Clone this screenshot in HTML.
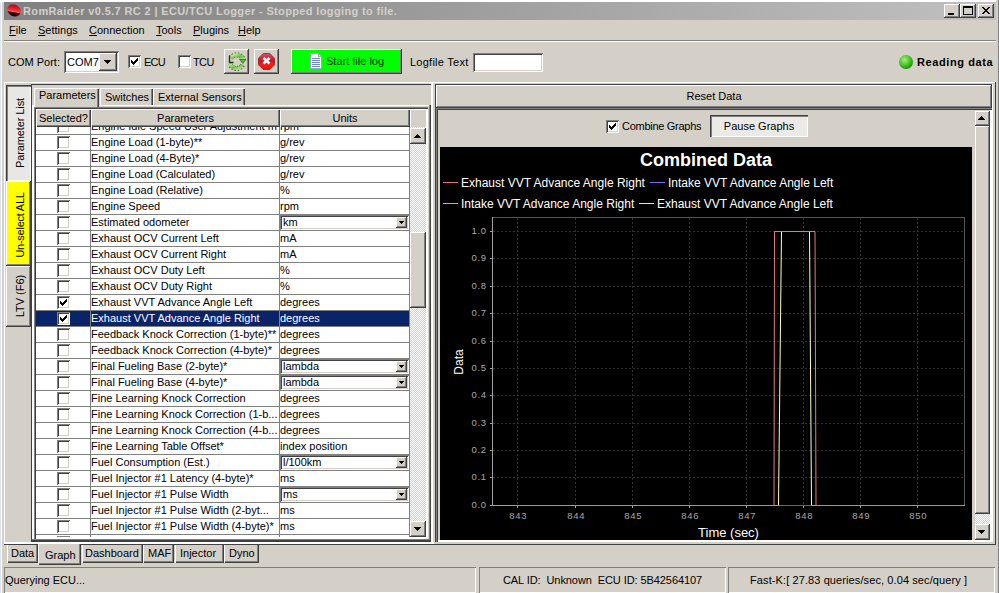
<!DOCTYPE html><html><head><meta charset="utf-8"><style>
html,body{margin:0;padding:0;} body{width:999px;height:593px;overflow:hidden;position:relative;background:#d4d0c8;font-family:"Liberation Sans", sans-serif;font-size:11px;color:#000;}
.t{position:absolute;white-space:nowrap;line-height:0;height:0;}
.t>span.u{text-decoration:underline;}
</style></head><body>
<div style="position:absolute;left:0px;top:0px;width:1px;height:593px;background:#dde3ea;"></div>
<div style="position:absolute;left:1px;top:0px;width:1px;height:593px;background:#ffffff;"></div>
<div style="position:absolute;left:0px;top:0px;width:999px;height:2px;background:#ffffff;"></div>
<div style="position:absolute;left:996px;top:0px;width:2px;height:593px;background:#d4d0c8;"></div>
<div style="position:absolute;left:998px;top:0px;width:1px;height:593px;background:#808080;"></div>
<div style="position:absolute;left:4px;top:2px;width:992px;height:18px;background:linear-gradient(to right,#808080,#c0c0c0);"></div>
<svg style="position:absolute;left:4px;top:2px" width="20" height="18"><defs><linearGradient id="ig" gradientUnits="userSpaceOnUse" x1="8" y1="3" x2="6" y2="15"><stop offset="0" stop-color="#b01020"/><stop offset="0.3" stop-color="#e82030"/><stop offset="0.52" stop-color="#ff5060"/><stop offset="0.6" stop-color="#400000"/><stop offset="1" stop-color="#000"/></linearGradient><clipPath id="ic"><ellipse cx="10" cy="8.3" rx="7" ry="5.8" transform="rotate(28 10 8.3)"/></clipPath></defs><rect x="0" y="0" width="20" height="18" fill="url(#ig)" clip-path="url(#ic)"/></svg>
<div class="t" style="left:23px;top:11px;font-size:11px;color:#d4d0c8;font-weight:bold;letter-spacing:0.36px;">RomRaider v0.5.7 RC 2 | ECU/TCU Logger - Stopped logging to file.</div>
<div style="position:absolute;left:944px;top:4px;width:16px;height:14px;background:#d4d0c8;box-shadow:inset -1px -1px #404040, inset 1px 1px #ffffff, inset -2px -2px #808080, inset 2px 2px #d4d0c8;"><svg width="16" height="14" style="position:absolute;left:0;top:0" shape-rendering="crispEdges"><rect x="4" y="9" width="6" height="2" fill="#000"/></svg></div>
<div style="position:absolute;left:960px;top:4px;width:16px;height:14px;background:#d4d0c8;box-shadow:inset -1px -1px #404040, inset 1px 1px #ffffff, inset -2px -2px #808080, inset 2px 2px #d4d0c8;"><svg width="16" height="14" style="position:absolute;left:0;top:0" shape-rendering="crispEdges"><path fill="none" stroke="#000" d="M3.5 3.5h9v7h-9z"/><rect x="3" y="2" width="10" height="2" fill="#000"/></svg></div>
<div style="position:absolute;left:978px;top:4px;width:16px;height:14px;background:#d4d0c8;box-shadow:inset -1px -1px #404040, inset 1px 1px #ffffff, inset -2px -2px #808080, inset 2px 2px #d4d0c8;"><svg width="16" height="14" style="position:absolute;left:0;top:0" shape-rendering="crispEdges"><path fill="#000" d="M4 3h2v1h1v1h2v-1h1v-1h2v1h-1v1h-1v1h-1v1h1v1h1v1h1v1h-2v-1h-1v-1h-2v1h-1v1h-2v-1h1v-1h1v-1h1v-1h-1v-1h-1v-1h-1z"/></svg></div>
<div class="t" style="left:9px;top:30px;font-size:11px;color:#000;font-weight:normal;"><span class="u">F</span>ile</div>
<div class="t" style="left:38px;top:30px;font-size:11px;color:#000;font-weight:normal;"><span class="u">S</span>ettings</div>
<div class="t" style="left:89px;top:30px;font-size:11px;color:#000;font-weight:normal;"><span class="u">C</span>onnection</div>
<div class="t" style="left:156px;top:30px;font-size:11px;color:#000;font-weight:normal;"><span class="u">T</span>ools</div>
<div class="t" style="left:193px;top:30px;font-size:11px;color:#000;font-weight:normal;"><span class="u">P</span>lugins</div>
<div class="t" style="left:238px;top:30px;font-size:11px;color:#000;font-weight:normal;"><span class="u">H</span>elp</div>
<div style="position:absolute;left:4px;top:40px;width:992px;height:1px;background:#808080;"></div>
<div style="position:absolute;left:4px;top:41px;width:992px;height:1px;background:#ffffff;"></div>
<div class="t" style="left:8px;top:62px;font-size:11px;color:#000;font-weight:normal;">COM Port:</div>
<div style="position:absolute;left:64px;top:51px;width:55px;height:22px;background:#fff;box-shadow:inset 1px 1px #808080, inset -1px -1px #ffffff, inset 2px 2px #404040, inset -2px -2px #d4d0c8;"><div class="t" style="left:3px;top:11px;font-size:11px;color:#000;font-weight:normal;">COM7</div></div>
<div style="position:absolute;left:99px;top:53px;width:18px;height:18px;background:#d4d0c8;box-shadow:inset -1px -1px #404040, inset 1px 1px #ffffff, inset -2px -2px #808080, inset 2px 2px #d4d0c8;"><svg width="18" height="18" style="position:absolute;left:0;top:0" shape-rendering="crispEdges"><path fill="#000" d="M5 7h7v1h-7zM6 8h5v1h-5zM7 9h3v1h-3zM8 10h1v1h-1z"/></svg></div>
<div style="position:absolute;left:128px;top:55px;width:13px;height:13px;background:#fff;box-shadow:inset 1px 1px #808080, inset -1px -1px #ffffff, inset 2px 2px #404040, inset -2px -2px #d4d0c8;"><svg width="13" height="13" style="position:absolute;left:0;top:0" shape-rendering="crispEdges"><path fill="#000" d="M9 3h1v1h-1zM8 4h2v1h-2zM3 5h1v1h-1zM7 5h3v1h-3zM3 6h2v1h-2zM6 6h3v1h-3zM3 7h5v1h-5zM4 8h3v1h-3zM5 9h1v1h-1z"/></svg></div>
<div class="t" style="left:144px;top:62px;font-size:11px;color:#000;font-weight:normal;letter-spacing:-0.8px;">ECU</div>
<div style="position:absolute;left:178px;top:55px;width:13px;height:13px;background:#fff;box-shadow:inset 1px 1px #808080, inset -1px -1px #ffffff, inset 2px 2px #404040, inset -2px -2px #d4d0c8;"></div>
<div class="t" style="left:193px;top:62px;font-size:11px;color:#000;font-weight:normal;letter-spacing:-0.6px;">TCU</div>
<div style="position:absolute;left:224px;top:49px;width:25px;height:25px;background:#d4d0c8;box-shadow:inset -1px -1px #404040, inset 1px 1px #ffffff, inset -2px -2px #808080, inset 2px 2px #d4d0c8;"><svg width="25" height="25" style="position:absolute;left:0;top:0"><defs><linearGradient id="rg" x1="0" y1="0" x2="1" y2="1"><stop offset="0" stop-color="#c8f0a0"/><stop offset="0.5" stop-color="#6cc040"/><stop offset="1" stop-color="#b0e890"/></linearGradient></defs><g fill="none" stroke-linecap="butt"><path d="M7 9 A7 7 0 0 1 19.5 11" stroke="#2a5a10" stroke-width="5" stroke-dasharray="1.2,1.3"/><path d="M7 9 A7 7 0 0 1 19.5 11" stroke="url(#rg)" stroke-width="3.4"/><path d="M18.5 16 A7 7 0 0 1 6 15" stroke="#2a5a10" stroke-width="5" stroke-dasharray="1.2,1.3"/><path d="M18.5 16 A7 7 0 0 1 6 15" stroke="url(#rg)" stroke-width="3.4"/></g><path d="M15.5 10.5h6.5l-3.2 4z" fill="#5cb030" stroke="#2a5a10" stroke-width="0.6"/><path d="M5.5 6.5v7h4" fill="none" stroke="#1e3a10" stroke-width="1.4"/></svg></div>
<div style="position:absolute;left:254px;top:49px;width:25px;height:25px;background:#d4d0c8;box-shadow:inset -1px -1px #404040, inset 1px 1px #ffffff, inset -2px -2px #808080, inset 2px 2px #d4d0c8;"><svg width="25" height="25" style="position:absolute;left:0;top:0"><defs><linearGradient id="sg" x1="0" y1="0" x2="0" y2="1"><stop offset="0" stop-color="#d85070"/><stop offset="0.45" stop-color="#c01828"/><stop offset="0.7" stop-color="#ff1818"/><stop offset="1" stop-color="#e01010"/></linearGradient></defs><path d="M9.2 4.5h6.6l4.7 4.7v6.6l-4.7 4.7h-6.6l-4.7-4.7v-6.6z" fill="url(#sg)" stroke="#902020" stroke-width="0.8"/><path d="M9.5 9l6 5.5M15.5 9l-6 5.5" stroke="#fff" stroke-width="2.6"/></svg></div>
<div style="position:absolute;left:291px;top:49px;width:111px;height:25px;background:#00ff00;box-shadow:inset -1px -1px #404040, inset 1px 1px #ffffff, inset -2px -2px #808080;"><svg width="14" height="16" style="position:absolute;left:19px;top:4px" shape-rendering="crispEdges"><path d="M0.5 0.5h8l3 3v11.5h-11z" fill="#ffffff" stroke="#9aa8c8"/><path d="M8.5 0.5v3h3" fill="none" stroke="#9aa8c8"/><path d="M2 5h8M2 7h8M2 9h8M2 11h8M2 13h8" stroke="#6f86c8" stroke-width="1" transform="translate(0,0.5)"/></svg><div class="t" style="left:35px;top:12px;font-size:11px;color:#003000;font-weight:normal;">Start file log</div></div>
<div class="t" style="left:410px;top:62px;font-size:11px;color:#000;font-weight:normal;letter-spacing:0.25px;">Logfile Text</div>
<div style="position:absolute;left:473px;top:53px;width:70px;height:19px;background:#fff;box-shadow:inset 1px 1px #808080, inset -1px -1px #ffffff, inset 2px 2px #404040, inset -2px -2px #d4d0c8;"></div>
<svg style="position:absolute;left:898px;top:54px" width="16" height="16"><defs><radialGradient id="lg" cx="0.4" cy="0.35" r="0.7"><stop offset="0" stop-color="#a8f080"/><stop offset="0.6" stop-color="#40c020"/><stop offset="1" stop-color="#208010"/></radialGradient></defs><circle cx="8" cy="8" r="7" fill="url(#lg)"/></svg>
<div class="t" style="left:917px;top:62px;font-size:11px;color:#000;font-weight:bold;letter-spacing:0.6px;">Reading data</div>
<div style="position:absolute;left:4px;top:82px;width:992px;height:1px;background:#fff;"></div>
<div style="position:absolute;left:4px;top:82px;width:1px;height:463px;background:#fff;"></div>
<div style="position:absolute;left:4px;top:544px;width:992px;height:1px;background:#404040;"></div>
<div style="position:absolute;left:995px;top:82px;width:1px;height:463px;background:#404040;"></div>
<div style="position:absolute;left:6px;top:85px;width:25px;height:96px;background:#e9e7e3;box-shadow:inset 1px 1px #404040, inset 2px 2px #808080, inset -1px -1px #ffffff;"></div>
<div style="position:absolute;left:20px;top:133px;width:0;height:0;"><div style="position:absolute;left:0;top:0;transform:translate(-50%,-50%) rotate(-90deg);white-space:nowrap;font-size:11px;line-height:13px;color:#000;letter-spacing:-0.1px">Parameter List</div></div>
<div style="position:absolute;left:6px;top:181px;width:25px;height:85px;background:#ffff00;box-shadow:inset -1px -1px #404040, inset 1px 1px #ffffff, inset -2px -2px #808080;"></div>
<div style="position:absolute;left:20px;top:225px;width:0;height:0;"><div style="position:absolute;left:0;top:0;transform:translate(-50%,-50%) rotate(-90deg);white-space:nowrap;font-size:11px;line-height:13px;color:#000;letter-spacing:-0.25px">Un-select ALL</div></div>
<div style="position:absolute;left:6px;top:266px;width:25px;height:61px;background:#d4d0c8;box-shadow:inset -1px -1px #404040, inset 1px 1px #ffffff, inset -2px -2px #808080;"></div>
<div style="position:absolute;left:20px;top:296px;width:0;height:0;"><div style="position:absolute;left:0;top:0;transform:translate(-50%,-50%) rotate(-90deg);white-space:nowrap;font-size:11px;line-height:13px;color:#000;letter-spacing:0px">LTV (F6)</div></div>
<div style="position:absolute;left:31px;top:84px;width:1px;height:458px;background:#404040;"></div>
<div style="position:absolute;left:31px;top:84px;width:401px;height:1px;background:#404040;"></div>
<div style="position:absolute;left:32px;top:105px;width:398px;height:1px;background:#fff;"></div>
<div style="position:absolute;left:32px;top:105px;width:2px;height:436px;background:#fff;"></div>
<div style="position:absolute;left:429px;top:105px;width:1px;height:436px;background:#808080;"></div>
<div style="position:absolute;left:430px;top:105px;width:1px;height:437px;background:#404040;"></div>
<div style="position:absolute;left:32px;top:539px;width:398px;height:1px;background:#808080;"></div>
<div style="position:absolute;left:31px;top:540px;width:400px;height:2px;background:#404040;"></div>
<div style="position:absolute;left:5px;top:542px;width:429px;height:2px;background:#fff;"></div>
<div style="position:absolute;left:100px;top:88px;width:53px;height:17px;background:#d4d0c8;box-shadow:inset 1px 1px #ffffff, inset -1px 0 #404040, inset -2px 0 #808080;"><div class="t" style="left:5px;top:9px;font-size:11px;color:#000;font-weight:normal;">Switches</div></div>
<div style="position:absolute;left:153px;top:88px;width:92px;height:17px;background:#d4d0c8;box-shadow:inset 1px 1px #ffffff, inset -1px 0 #404040, inset -2px 0 #808080;"><div class="t" style="left:5px;top:9px;font-size:11px;color:#000;font-weight:normal;">External Sensors</div></div>
<div style="position:absolute;left:34px;top:88px;width:65px;height:19px;background:#d4d0c8;box-shadow:inset 1px 1px #ffffff, inset -1px 0 #404040, inset -2px 0 #808080;"><div class="t" style="left:5px;top:7px;font-size:11px;color:#000;font-weight:normal;">Parameters</div></div>
<div style="position:absolute;left:34px;top:107px;width:394px;height:432px;background:#fff;box-shadow:inset 1px 1px #808080, inset 2px 2px #404040, inset -2px -2px #fff;"></div>
<div style="position:absolute;left:36px;top:109px;width:55px;height:18px;background:#d4d0c8;box-shadow:inset 1px 1px #fff, inset -1px -1px #404040, inset -2px -2px #808080;"><div class="t" style="left:0;width:55px;text-align:center;top:9px;">Selected?</div></div>
<div style="position:absolute;left:91px;top:109px;width:189px;height:18px;background:#d4d0c8;box-shadow:inset 1px 1px #fff, inset -1px -1px #404040, inset -2px -2px #808080;"><div class="t" style="left:0;width:189px;text-align:center;top:9px;">Parameters</div></div>
<div style="position:absolute;left:280px;top:109px;width:130px;height:18px;background:#d4d0c8;box-shadow:inset 1px 1px #fff, inset -1px -1px #404040, inset -2px -2px #808080;"><div class="t" style="left:0;width:130px;text-align:center;top:9px;">Units</div></div>
<div style="position:absolute;left:410px;top:109px;width:16px;height:18px;background:#d4d0c8;box-shadow:inset 1px 1px #fff;"></div>
<div style="position:absolute;left:36px;top:127px;width:374px;height:410px;overflow:hidden;"><div style="position:absolute;left:0;top:-8px;width:374px;height:16px;"><div style="position:absolute;left:0px;top:0px;width:374px;height:15px;background:#fff;"></div><div style="position:absolute;left:0px;top:15px;width:374px;height:1px;background:#808080;"></div><div style="position:absolute;left:54px;top:0px;width:1px;height:16px;background:#808080;"></div><div style="position:absolute;left:243px;top:0px;width:1px;height:16px;background:#808080;"></div><div style="position:absolute;left:373px;top:0px;width:1px;height:16px;background:#808080;"></div><div style="position:absolute;left:21px;top:1px;width:13px;height:13px;background:#fff;box-shadow:inset 1px 1px #808080, inset -1px -1px #ffffff, inset 2px 2px #404040, inset -2px -2px #d4d0c8;"></div><div style="position:absolute;left:55px;top:0;width:188px;height:15px;overflow:hidden;"><div class="t" style="left:0px;top:7px;font-size:11px;color:#000;font-weight:normal;">Engine Idle Speed User Adjustment m</div></div><div style="position:absolute;left:244px;top:0;width:129px;height:15px;overflow:hidden;"><div class="t" style="left:0px;top:7px;font-size:11px;color:#000;font-weight:normal;">rpm</div></div></div><div style="position:absolute;left:0;top:8px;width:374px;height:16px;"><div style="position:absolute;left:0px;top:0px;width:374px;height:15px;background:#fff;"></div><div style="position:absolute;left:0px;top:15px;width:374px;height:1px;background:#808080;"></div><div style="position:absolute;left:54px;top:0px;width:1px;height:16px;background:#808080;"></div><div style="position:absolute;left:243px;top:0px;width:1px;height:16px;background:#808080;"></div><div style="position:absolute;left:373px;top:0px;width:1px;height:16px;background:#808080;"></div><div style="position:absolute;left:21px;top:1px;width:13px;height:13px;background:#fff;box-shadow:inset 1px 1px #808080, inset -1px -1px #ffffff, inset 2px 2px #404040, inset -2px -2px #d4d0c8;"></div><div style="position:absolute;left:55px;top:0;width:188px;height:15px;overflow:hidden;"><div class="t" style="left:0px;top:7px;font-size:11px;color:#000;font-weight:normal;">Engine Load (1-byte)**</div></div><div style="position:absolute;left:244px;top:0;width:129px;height:15px;overflow:hidden;"><div class="t" style="left:0px;top:7px;font-size:11px;color:#000;font-weight:normal;">g/rev</div></div></div><div style="position:absolute;left:0;top:24px;width:374px;height:16px;"><div style="position:absolute;left:0px;top:0px;width:374px;height:15px;background:#fff;"></div><div style="position:absolute;left:0px;top:15px;width:374px;height:1px;background:#808080;"></div><div style="position:absolute;left:54px;top:0px;width:1px;height:16px;background:#808080;"></div><div style="position:absolute;left:243px;top:0px;width:1px;height:16px;background:#808080;"></div><div style="position:absolute;left:373px;top:0px;width:1px;height:16px;background:#808080;"></div><div style="position:absolute;left:21px;top:1px;width:13px;height:13px;background:#fff;box-shadow:inset 1px 1px #808080, inset -1px -1px #ffffff, inset 2px 2px #404040, inset -2px -2px #d4d0c8;"></div><div style="position:absolute;left:55px;top:0;width:188px;height:15px;overflow:hidden;"><div class="t" style="left:0px;top:7px;font-size:11px;color:#000;font-weight:normal;">Engine Load (4-Byte)*</div></div><div style="position:absolute;left:244px;top:0;width:129px;height:15px;overflow:hidden;"><div class="t" style="left:0px;top:7px;font-size:11px;color:#000;font-weight:normal;">g/rev</div></div></div><div style="position:absolute;left:0;top:40px;width:374px;height:16px;"><div style="position:absolute;left:0px;top:0px;width:374px;height:15px;background:#fff;"></div><div style="position:absolute;left:0px;top:15px;width:374px;height:1px;background:#808080;"></div><div style="position:absolute;left:54px;top:0px;width:1px;height:16px;background:#808080;"></div><div style="position:absolute;left:243px;top:0px;width:1px;height:16px;background:#808080;"></div><div style="position:absolute;left:373px;top:0px;width:1px;height:16px;background:#808080;"></div><div style="position:absolute;left:21px;top:1px;width:13px;height:13px;background:#fff;box-shadow:inset 1px 1px #808080, inset -1px -1px #ffffff, inset 2px 2px #404040, inset -2px -2px #d4d0c8;"></div><div style="position:absolute;left:55px;top:0;width:188px;height:15px;overflow:hidden;"><div class="t" style="left:0px;top:7px;font-size:11px;color:#000;font-weight:normal;">Engine Load (Calculated)</div></div><div style="position:absolute;left:244px;top:0;width:129px;height:15px;overflow:hidden;"><div class="t" style="left:0px;top:7px;font-size:11px;color:#000;font-weight:normal;">g/rev</div></div></div><div style="position:absolute;left:0;top:56px;width:374px;height:16px;"><div style="position:absolute;left:0px;top:0px;width:374px;height:15px;background:#fff;"></div><div style="position:absolute;left:0px;top:15px;width:374px;height:1px;background:#808080;"></div><div style="position:absolute;left:54px;top:0px;width:1px;height:16px;background:#808080;"></div><div style="position:absolute;left:243px;top:0px;width:1px;height:16px;background:#808080;"></div><div style="position:absolute;left:373px;top:0px;width:1px;height:16px;background:#808080;"></div><div style="position:absolute;left:21px;top:1px;width:13px;height:13px;background:#fff;box-shadow:inset 1px 1px #808080, inset -1px -1px #ffffff, inset 2px 2px #404040, inset -2px -2px #d4d0c8;"></div><div style="position:absolute;left:55px;top:0;width:188px;height:15px;overflow:hidden;"><div class="t" style="left:0px;top:7px;font-size:11px;color:#000;font-weight:normal;">Engine Load (Relative)</div></div><div style="position:absolute;left:244px;top:0;width:129px;height:15px;overflow:hidden;"><div class="t" style="left:0px;top:7px;font-size:11px;color:#000;font-weight:normal;">%</div></div></div><div style="position:absolute;left:0;top:72px;width:374px;height:16px;"><div style="position:absolute;left:0px;top:0px;width:374px;height:15px;background:#fff;"></div><div style="position:absolute;left:0px;top:15px;width:374px;height:1px;background:#808080;"></div><div style="position:absolute;left:54px;top:0px;width:1px;height:16px;background:#808080;"></div><div style="position:absolute;left:243px;top:0px;width:1px;height:16px;background:#808080;"></div><div style="position:absolute;left:373px;top:0px;width:1px;height:16px;background:#808080;"></div><div style="position:absolute;left:21px;top:1px;width:13px;height:13px;background:#fff;box-shadow:inset 1px 1px #808080, inset -1px -1px #ffffff, inset 2px 2px #404040, inset -2px -2px #d4d0c8;"></div><div style="position:absolute;left:55px;top:0;width:188px;height:15px;overflow:hidden;"><div class="t" style="left:0px;top:7px;font-size:11px;color:#000;font-weight:normal;">Engine Speed</div></div><div style="position:absolute;left:244px;top:0;width:129px;height:15px;overflow:hidden;"><div class="t" style="left:0px;top:7px;font-size:11px;color:#000;font-weight:normal;">rpm</div></div></div><div style="position:absolute;left:0;top:88px;width:374px;height:16px;"><div style="position:absolute;left:0px;top:0px;width:374px;height:15px;background:#fff;"></div><div style="position:absolute;left:0px;top:15px;width:374px;height:1px;background:#808080;"></div><div style="position:absolute;left:54px;top:0px;width:1px;height:16px;background:#808080;"></div><div style="position:absolute;left:243px;top:0px;width:1px;height:16px;background:#808080;"></div><div style="position:absolute;left:373px;top:0px;width:1px;height:16px;background:#808080;"></div><div style="position:absolute;left:21px;top:1px;width:13px;height:13px;background:#fff;box-shadow:inset 1px 1px #808080, inset -1px -1px #ffffff, inset 2px 2px #404040, inset -2px -2px #d4d0c8;"></div><div style="position:absolute;left:55px;top:0;width:188px;height:15px;overflow:hidden;"><div class="t" style="left:0px;top:7px;font-size:11px;color:#000;font-weight:normal;">Estimated odometer</div></div><div style="position:absolute;left:244px;top:0px;width:129px;height:15px;background:#fff;box-shadow:inset 1px 1px #808080, inset -1px -1px #ffffff, inset 2px 2px #404040, inset -2px -2px #d4d0c8;"><div class="t" style="left:3px;top:7px;font-size:11px;color:#000;font-weight:normal;">km</div><div style="position:absolute;left:116px;top:2px;width:11px;height:11px;background:#d4d0c8;box-shadow:inset -1px -1px #404040, inset 1px 1px #ffffff, inset -2px -2px #808080, inset 2px 2px #d4d0c8;"><svg width="11" height="11" style="position:absolute;left:0;top:0" shape-rendering="crispEdges"><path fill="#000" d="M3 4h5v1h-5zM4 5h3v1h-3zM5 6h1v1h-1z"/></svg></div></div></div><div style="position:absolute;left:0;top:104px;width:374px;height:16px;"><div style="position:absolute;left:0px;top:0px;width:374px;height:15px;background:#fff;"></div><div style="position:absolute;left:0px;top:15px;width:374px;height:1px;background:#808080;"></div><div style="position:absolute;left:54px;top:0px;width:1px;height:16px;background:#808080;"></div><div style="position:absolute;left:243px;top:0px;width:1px;height:16px;background:#808080;"></div><div style="position:absolute;left:373px;top:0px;width:1px;height:16px;background:#808080;"></div><div style="position:absolute;left:21px;top:1px;width:13px;height:13px;background:#fff;box-shadow:inset 1px 1px #808080, inset -1px -1px #ffffff, inset 2px 2px #404040, inset -2px -2px #d4d0c8;"></div><div style="position:absolute;left:55px;top:0;width:188px;height:15px;overflow:hidden;"><div class="t" style="left:0px;top:7px;font-size:11px;color:#000;font-weight:normal;">Exhaust OCV Current Left</div></div><div style="position:absolute;left:244px;top:0;width:129px;height:15px;overflow:hidden;"><div class="t" style="left:0px;top:7px;font-size:11px;color:#000;font-weight:normal;">mA</div></div></div><div style="position:absolute;left:0;top:120px;width:374px;height:16px;"><div style="position:absolute;left:0px;top:0px;width:374px;height:15px;background:#fff;"></div><div style="position:absolute;left:0px;top:15px;width:374px;height:1px;background:#808080;"></div><div style="position:absolute;left:54px;top:0px;width:1px;height:16px;background:#808080;"></div><div style="position:absolute;left:243px;top:0px;width:1px;height:16px;background:#808080;"></div><div style="position:absolute;left:373px;top:0px;width:1px;height:16px;background:#808080;"></div><div style="position:absolute;left:21px;top:1px;width:13px;height:13px;background:#fff;box-shadow:inset 1px 1px #808080, inset -1px -1px #ffffff, inset 2px 2px #404040, inset -2px -2px #d4d0c8;"></div><div style="position:absolute;left:55px;top:0;width:188px;height:15px;overflow:hidden;"><div class="t" style="left:0px;top:7px;font-size:11px;color:#000;font-weight:normal;">Exhaust OCV Current Right</div></div><div style="position:absolute;left:244px;top:0;width:129px;height:15px;overflow:hidden;"><div class="t" style="left:0px;top:7px;font-size:11px;color:#000;font-weight:normal;">mA</div></div></div><div style="position:absolute;left:0;top:136px;width:374px;height:16px;"><div style="position:absolute;left:0px;top:0px;width:374px;height:15px;background:#fff;"></div><div style="position:absolute;left:0px;top:15px;width:374px;height:1px;background:#808080;"></div><div style="position:absolute;left:54px;top:0px;width:1px;height:16px;background:#808080;"></div><div style="position:absolute;left:243px;top:0px;width:1px;height:16px;background:#808080;"></div><div style="position:absolute;left:373px;top:0px;width:1px;height:16px;background:#808080;"></div><div style="position:absolute;left:21px;top:1px;width:13px;height:13px;background:#fff;box-shadow:inset 1px 1px #808080, inset -1px -1px #ffffff, inset 2px 2px #404040, inset -2px -2px #d4d0c8;"></div><div style="position:absolute;left:55px;top:0;width:188px;height:15px;overflow:hidden;"><div class="t" style="left:0px;top:7px;font-size:11px;color:#000;font-weight:normal;">Exhaust OCV Duty Left</div></div><div style="position:absolute;left:244px;top:0;width:129px;height:15px;overflow:hidden;"><div class="t" style="left:0px;top:7px;font-size:11px;color:#000;font-weight:normal;">%</div></div></div><div style="position:absolute;left:0;top:152px;width:374px;height:16px;"><div style="position:absolute;left:0px;top:0px;width:374px;height:15px;background:#fff;"></div><div style="position:absolute;left:0px;top:15px;width:374px;height:1px;background:#808080;"></div><div style="position:absolute;left:54px;top:0px;width:1px;height:16px;background:#808080;"></div><div style="position:absolute;left:243px;top:0px;width:1px;height:16px;background:#808080;"></div><div style="position:absolute;left:373px;top:0px;width:1px;height:16px;background:#808080;"></div><div style="position:absolute;left:21px;top:1px;width:13px;height:13px;background:#fff;box-shadow:inset 1px 1px #808080, inset -1px -1px #ffffff, inset 2px 2px #404040, inset -2px -2px #d4d0c8;"></div><div style="position:absolute;left:55px;top:0;width:188px;height:15px;overflow:hidden;"><div class="t" style="left:0px;top:7px;font-size:11px;color:#000;font-weight:normal;">Exhaust OCV Duty Right</div></div><div style="position:absolute;left:244px;top:0;width:129px;height:15px;overflow:hidden;"><div class="t" style="left:0px;top:7px;font-size:11px;color:#000;font-weight:normal;">%</div></div></div><div style="position:absolute;left:0;top:168px;width:374px;height:16px;"><div style="position:absolute;left:0px;top:0px;width:374px;height:15px;background:#fff;"></div><div style="position:absolute;left:0px;top:15px;width:374px;height:1px;background:#808080;"></div><div style="position:absolute;left:54px;top:0px;width:1px;height:16px;background:#808080;"></div><div style="position:absolute;left:243px;top:0px;width:1px;height:16px;background:#808080;"></div><div style="position:absolute;left:373px;top:0px;width:1px;height:16px;background:#808080;"></div><div style="position:absolute;left:21px;top:1px;width:13px;height:13px;background:#fff;box-shadow:inset 1px 1px #808080, inset -1px -1px #ffffff, inset 2px 2px #404040, inset -2px -2px #d4d0c8;"><svg width="13" height="13" style="position:absolute;left:0;top:0" shape-rendering="crispEdges"><path fill="#000" d="M9 3h1v1h-1zM8 4h2v1h-2zM3 5h1v1h-1zM7 5h3v1h-3zM3 6h2v1h-2zM6 6h3v1h-3zM3 7h5v1h-5zM4 8h3v1h-3zM5 9h1v1h-1z"/></svg></div><div style="position:absolute;left:55px;top:0;width:188px;height:15px;overflow:hidden;"><div class="t" style="left:0px;top:7px;font-size:11px;color:#000;font-weight:normal;">Exhaust VVT Advance Angle Left</div></div><div style="position:absolute;left:244px;top:0;width:129px;height:15px;overflow:hidden;"><div class="t" style="left:0px;top:7px;font-size:11px;color:#000;font-weight:normal;">degrees</div></div></div><div style="position:absolute;left:0;top:184px;width:374px;height:16px;"><div style="position:absolute;left:0px;top:0px;width:374px;height:15px;background:#0a246a;"></div><div style="position:absolute;left:0px;top:15px;width:374px;height:1px;background:#808080;"></div><div style="position:absolute;left:54px;top:0px;width:1px;height:16px;background:#808080;"></div><div style="position:absolute;left:243px;top:0px;width:1px;height:16px;background:#808080;"></div><div style="position:absolute;left:373px;top:0px;width:1px;height:16px;background:#808080;"></div><div style="position:absolute;left:21px;top:1px;width:13px;height:13px;background:#fff;box-shadow:inset 1px 1px #808080, inset -1px -1px #ffffff, inset 2px 2px #404040, inset -2px -2px #d4d0c8;"><svg width="13" height="13" style="position:absolute;left:0;top:0" shape-rendering="crispEdges"><path fill="#000" d="M9 3h1v1h-1zM8 4h2v1h-2zM3 5h1v1h-1zM7 5h3v1h-3zM3 6h2v1h-2zM6 6h3v1h-3zM3 7h5v1h-5zM4 8h3v1h-3zM5 9h1v1h-1z"/></svg></div><div style="position:absolute;left:55px;top:0;width:188px;height:15px;overflow:hidden;"><div class="t" style="left:0px;top:7px;font-size:11px;color:#fff;font-weight:normal;">Exhaust VVT Advance Angle Right</div></div><div style="position:absolute;left:244px;top:0;width:129px;height:15px;overflow:hidden;"><div class="t" style="left:0px;top:7px;font-size:11px;color:#fff;font-weight:normal;">degrees</div></div></div><div style="position:absolute;left:0;top:200px;width:374px;height:16px;"><div style="position:absolute;left:0px;top:0px;width:374px;height:15px;background:#fff;"></div><div style="position:absolute;left:0px;top:15px;width:374px;height:1px;background:#808080;"></div><div style="position:absolute;left:54px;top:0px;width:1px;height:16px;background:#808080;"></div><div style="position:absolute;left:243px;top:0px;width:1px;height:16px;background:#808080;"></div><div style="position:absolute;left:373px;top:0px;width:1px;height:16px;background:#808080;"></div><div style="position:absolute;left:21px;top:1px;width:13px;height:13px;background:#fff;box-shadow:inset 1px 1px #808080, inset -1px -1px #ffffff, inset 2px 2px #404040, inset -2px -2px #d4d0c8;"></div><div style="position:absolute;left:55px;top:0;width:188px;height:15px;overflow:hidden;"><div class="t" style="left:0px;top:7px;font-size:11px;color:#000;font-weight:normal;">Feedback Knock Correction (1-byte)**</div></div><div style="position:absolute;left:244px;top:0;width:129px;height:15px;overflow:hidden;"><div class="t" style="left:0px;top:7px;font-size:11px;color:#000;font-weight:normal;">degrees</div></div></div><div style="position:absolute;left:0;top:216px;width:374px;height:16px;"><div style="position:absolute;left:0px;top:0px;width:374px;height:15px;background:#fff;"></div><div style="position:absolute;left:0px;top:15px;width:374px;height:1px;background:#808080;"></div><div style="position:absolute;left:54px;top:0px;width:1px;height:16px;background:#808080;"></div><div style="position:absolute;left:243px;top:0px;width:1px;height:16px;background:#808080;"></div><div style="position:absolute;left:373px;top:0px;width:1px;height:16px;background:#808080;"></div><div style="position:absolute;left:21px;top:1px;width:13px;height:13px;background:#fff;box-shadow:inset 1px 1px #808080, inset -1px -1px #ffffff, inset 2px 2px #404040, inset -2px -2px #d4d0c8;"></div><div style="position:absolute;left:55px;top:0;width:188px;height:15px;overflow:hidden;"><div class="t" style="left:0px;top:7px;font-size:11px;color:#000;font-weight:normal;">Feedback Knock Correction (4-byte)*</div></div><div style="position:absolute;left:244px;top:0;width:129px;height:15px;overflow:hidden;"><div class="t" style="left:0px;top:7px;font-size:11px;color:#000;font-weight:normal;">degrees</div></div></div><div style="position:absolute;left:0;top:232px;width:374px;height:16px;"><div style="position:absolute;left:0px;top:0px;width:374px;height:15px;background:#fff;"></div><div style="position:absolute;left:0px;top:15px;width:374px;height:1px;background:#808080;"></div><div style="position:absolute;left:54px;top:0px;width:1px;height:16px;background:#808080;"></div><div style="position:absolute;left:243px;top:0px;width:1px;height:16px;background:#808080;"></div><div style="position:absolute;left:373px;top:0px;width:1px;height:16px;background:#808080;"></div><div style="position:absolute;left:21px;top:1px;width:13px;height:13px;background:#fff;box-shadow:inset 1px 1px #808080, inset -1px -1px #ffffff, inset 2px 2px #404040, inset -2px -2px #d4d0c8;"></div><div style="position:absolute;left:55px;top:0;width:188px;height:15px;overflow:hidden;"><div class="t" style="left:0px;top:7px;font-size:11px;color:#000;font-weight:normal;">Final Fueling Base (2-byte)*</div></div><div style="position:absolute;left:244px;top:0px;width:129px;height:15px;background:#fff;box-shadow:inset 1px 1px #808080, inset -1px -1px #ffffff, inset 2px 2px #404040, inset -2px -2px #d4d0c8;"><div class="t" style="left:3px;top:7px;font-size:11px;color:#000;font-weight:normal;">lambda</div><div style="position:absolute;left:116px;top:2px;width:11px;height:11px;background:#d4d0c8;box-shadow:inset -1px -1px #404040, inset 1px 1px #ffffff, inset -2px -2px #808080, inset 2px 2px #d4d0c8;"><svg width="11" height="11" style="position:absolute;left:0;top:0" shape-rendering="crispEdges"><path fill="#000" d="M3 4h5v1h-5zM4 5h3v1h-3zM5 6h1v1h-1z"/></svg></div></div></div><div style="position:absolute;left:0;top:248px;width:374px;height:16px;"><div style="position:absolute;left:0px;top:0px;width:374px;height:15px;background:#fff;"></div><div style="position:absolute;left:0px;top:15px;width:374px;height:1px;background:#808080;"></div><div style="position:absolute;left:54px;top:0px;width:1px;height:16px;background:#808080;"></div><div style="position:absolute;left:243px;top:0px;width:1px;height:16px;background:#808080;"></div><div style="position:absolute;left:373px;top:0px;width:1px;height:16px;background:#808080;"></div><div style="position:absolute;left:21px;top:1px;width:13px;height:13px;background:#fff;box-shadow:inset 1px 1px #808080, inset -1px -1px #ffffff, inset 2px 2px #404040, inset -2px -2px #d4d0c8;"></div><div style="position:absolute;left:55px;top:0;width:188px;height:15px;overflow:hidden;"><div class="t" style="left:0px;top:7px;font-size:11px;color:#000;font-weight:normal;">Final Fueling Base (4-byte)*</div></div><div style="position:absolute;left:244px;top:0px;width:129px;height:15px;background:#fff;box-shadow:inset 1px 1px #808080, inset -1px -1px #ffffff, inset 2px 2px #404040, inset -2px -2px #d4d0c8;"><div class="t" style="left:3px;top:7px;font-size:11px;color:#000;font-weight:normal;">lambda</div><div style="position:absolute;left:116px;top:2px;width:11px;height:11px;background:#d4d0c8;box-shadow:inset -1px -1px #404040, inset 1px 1px #ffffff, inset -2px -2px #808080, inset 2px 2px #d4d0c8;"><svg width="11" height="11" style="position:absolute;left:0;top:0" shape-rendering="crispEdges"><path fill="#000" d="M3 4h5v1h-5zM4 5h3v1h-3zM5 6h1v1h-1z"/></svg></div></div></div><div style="position:absolute;left:0;top:264px;width:374px;height:16px;"><div style="position:absolute;left:0px;top:0px;width:374px;height:15px;background:#fff;"></div><div style="position:absolute;left:0px;top:15px;width:374px;height:1px;background:#808080;"></div><div style="position:absolute;left:54px;top:0px;width:1px;height:16px;background:#808080;"></div><div style="position:absolute;left:243px;top:0px;width:1px;height:16px;background:#808080;"></div><div style="position:absolute;left:373px;top:0px;width:1px;height:16px;background:#808080;"></div><div style="position:absolute;left:21px;top:1px;width:13px;height:13px;background:#fff;box-shadow:inset 1px 1px #808080, inset -1px -1px #ffffff, inset 2px 2px #404040, inset -2px -2px #d4d0c8;"></div><div style="position:absolute;left:55px;top:0;width:188px;height:15px;overflow:hidden;"><div class="t" style="left:0px;top:7px;font-size:11px;color:#000;font-weight:normal;">Fine Learning Knock Correction</div></div><div style="position:absolute;left:244px;top:0;width:129px;height:15px;overflow:hidden;"><div class="t" style="left:0px;top:7px;font-size:11px;color:#000;font-weight:normal;">degrees</div></div></div><div style="position:absolute;left:0;top:280px;width:374px;height:16px;"><div style="position:absolute;left:0px;top:0px;width:374px;height:15px;background:#fff;"></div><div style="position:absolute;left:0px;top:15px;width:374px;height:1px;background:#808080;"></div><div style="position:absolute;left:54px;top:0px;width:1px;height:16px;background:#808080;"></div><div style="position:absolute;left:243px;top:0px;width:1px;height:16px;background:#808080;"></div><div style="position:absolute;left:373px;top:0px;width:1px;height:16px;background:#808080;"></div><div style="position:absolute;left:21px;top:1px;width:13px;height:13px;background:#fff;box-shadow:inset 1px 1px #808080, inset -1px -1px #ffffff, inset 2px 2px #404040, inset -2px -2px #d4d0c8;"></div><div style="position:absolute;left:55px;top:0;width:188px;height:15px;overflow:hidden;"><div class="t" style="left:0px;top:7px;font-size:11px;color:#000;font-weight:normal;">Fine Learning Knock Correction (1-b...</div></div><div style="position:absolute;left:244px;top:0;width:129px;height:15px;overflow:hidden;"><div class="t" style="left:0px;top:7px;font-size:11px;color:#000;font-weight:normal;">degrees</div></div></div><div style="position:absolute;left:0;top:296px;width:374px;height:16px;"><div style="position:absolute;left:0px;top:0px;width:374px;height:15px;background:#fff;"></div><div style="position:absolute;left:0px;top:15px;width:374px;height:1px;background:#808080;"></div><div style="position:absolute;left:54px;top:0px;width:1px;height:16px;background:#808080;"></div><div style="position:absolute;left:243px;top:0px;width:1px;height:16px;background:#808080;"></div><div style="position:absolute;left:373px;top:0px;width:1px;height:16px;background:#808080;"></div><div style="position:absolute;left:21px;top:1px;width:13px;height:13px;background:#fff;box-shadow:inset 1px 1px #808080, inset -1px -1px #ffffff, inset 2px 2px #404040, inset -2px -2px #d4d0c8;"></div><div style="position:absolute;left:55px;top:0;width:188px;height:15px;overflow:hidden;"><div class="t" style="left:0px;top:7px;font-size:11px;color:#000;font-weight:normal;">Fine Learning Knock Correction (4-b...</div></div><div style="position:absolute;left:244px;top:0;width:129px;height:15px;overflow:hidden;"><div class="t" style="left:0px;top:7px;font-size:11px;color:#000;font-weight:normal;">degrees</div></div></div><div style="position:absolute;left:0;top:312px;width:374px;height:16px;"><div style="position:absolute;left:0px;top:0px;width:374px;height:15px;background:#fff;"></div><div style="position:absolute;left:0px;top:15px;width:374px;height:1px;background:#808080;"></div><div style="position:absolute;left:54px;top:0px;width:1px;height:16px;background:#808080;"></div><div style="position:absolute;left:243px;top:0px;width:1px;height:16px;background:#808080;"></div><div style="position:absolute;left:373px;top:0px;width:1px;height:16px;background:#808080;"></div><div style="position:absolute;left:21px;top:1px;width:13px;height:13px;background:#fff;box-shadow:inset 1px 1px #808080, inset -1px -1px #ffffff, inset 2px 2px #404040, inset -2px -2px #d4d0c8;"></div><div style="position:absolute;left:55px;top:0;width:188px;height:15px;overflow:hidden;"><div class="t" style="left:0px;top:7px;font-size:11px;color:#000;font-weight:normal;">Fine Learning Table Offset*</div></div><div style="position:absolute;left:244px;top:0;width:129px;height:15px;overflow:hidden;"><div class="t" style="left:0px;top:7px;font-size:11px;color:#000;font-weight:normal;">index position</div></div></div><div style="position:absolute;left:0;top:328px;width:374px;height:16px;"><div style="position:absolute;left:0px;top:0px;width:374px;height:15px;background:#fff;"></div><div style="position:absolute;left:0px;top:15px;width:374px;height:1px;background:#808080;"></div><div style="position:absolute;left:54px;top:0px;width:1px;height:16px;background:#808080;"></div><div style="position:absolute;left:243px;top:0px;width:1px;height:16px;background:#808080;"></div><div style="position:absolute;left:373px;top:0px;width:1px;height:16px;background:#808080;"></div><div style="position:absolute;left:21px;top:1px;width:13px;height:13px;background:#fff;box-shadow:inset 1px 1px #808080, inset -1px -1px #ffffff, inset 2px 2px #404040, inset -2px -2px #d4d0c8;"></div><div style="position:absolute;left:55px;top:0;width:188px;height:15px;overflow:hidden;"><div class="t" style="left:0px;top:7px;font-size:11px;color:#000;font-weight:normal;">Fuel Consumption (Est.)</div></div><div style="position:absolute;left:244px;top:0px;width:129px;height:15px;background:#fff;box-shadow:inset 1px 1px #808080, inset -1px -1px #ffffff, inset 2px 2px #404040, inset -2px -2px #d4d0c8;"><div class="t" style="left:3px;top:7px;font-size:11px;color:#000;font-weight:normal;">l/100km</div><div style="position:absolute;left:116px;top:2px;width:11px;height:11px;background:#d4d0c8;box-shadow:inset -1px -1px #404040, inset 1px 1px #ffffff, inset -2px -2px #808080, inset 2px 2px #d4d0c8;"><svg width="11" height="11" style="position:absolute;left:0;top:0" shape-rendering="crispEdges"><path fill="#000" d="M3 4h5v1h-5zM4 5h3v1h-3zM5 6h1v1h-1z"/></svg></div></div></div><div style="position:absolute;left:0;top:344px;width:374px;height:16px;"><div style="position:absolute;left:0px;top:0px;width:374px;height:15px;background:#fff;"></div><div style="position:absolute;left:0px;top:15px;width:374px;height:1px;background:#808080;"></div><div style="position:absolute;left:54px;top:0px;width:1px;height:16px;background:#808080;"></div><div style="position:absolute;left:243px;top:0px;width:1px;height:16px;background:#808080;"></div><div style="position:absolute;left:373px;top:0px;width:1px;height:16px;background:#808080;"></div><div style="position:absolute;left:21px;top:1px;width:13px;height:13px;background:#fff;box-shadow:inset 1px 1px #808080, inset -1px -1px #ffffff, inset 2px 2px #404040, inset -2px -2px #d4d0c8;"></div><div style="position:absolute;left:55px;top:0;width:188px;height:15px;overflow:hidden;"><div class="t" style="left:0px;top:7px;font-size:11px;color:#000;font-weight:normal;">Fuel Injector #1 Latency (4-byte)*</div></div><div style="position:absolute;left:244px;top:0;width:129px;height:15px;overflow:hidden;"><div class="t" style="left:0px;top:7px;font-size:11px;color:#000;font-weight:normal;">ms</div></div></div><div style="position:absolute;left:0;top:360px;width:374px;height:16px;"><div style="position:absolute;left:0px;top:0px;width:374px;height:15px;background:#fff;"></div><div style="position:absolute;left:0px;top:15px;width:374px;height:1px;background:#808080;"></div><div style="position:absolute;left:54px;top:0px;width:1px;height:16px;background:#808080;"></div><div style="position:absolute;left:243px;top:0px;width:1px;height:16px;background:#808080;"></div><div style="position:absolute;left:373px;top:0px;width:1px;height:16px;background:#808080;"></div><div style="position:absolute;left:21px;top:1px;width:13px;height:13px;background:#fff;box-shadow:inset 1px 1px #808080, inset -1px -1px #ffffff, inset 2px 2px #404040, inset -2px -2px #d4d0c8;"></div><div style="position:absolute;left:55px;top:0;width:188px;height:15px;overflow:hidden;"><div class="t" style="left:0px;top:7px;font-size:11px;color:#000;font-weight:normal;">Fuel Injector #1 Pulse Width</div></div><div style="position:absolute;left:244px;top:0px;width:129px;height:15px;background:#fff;box-shadow:inset 1px 1px #808080, inset -1px -1px #ffffff, inset 2px 2px #404040, inset -2px -2px #d4d0c8;"><div class="t" style="left:3px;top:7px;font-size:11px;color:#000;font-weight:normal;">ms</div><div style="position:absolute;left:116px;top:2px;width:11px;height:11px;background:#d4d0c8;box-shadow:inset -1px -1px #404040, inset 1px 1px #ffffff, inset -2px -2px #808080, inset 2px 2px #d4d0c8;"><svg width="11" height="11" style="position:absolute;left:0;top:0" shape-rendering="crispEdges"><path fill="#000" d="M3 4h5v1h-5zM4 5h3v1h-3zM5 6h1v1h-1z"/></svg></div></div></div><div style="position:absolute;left:0;top:376px;width:374px;height:16px;"><div style="position:absolute;left:0px;top:0px;width:374px;height:15px;background:#fff;"></div><div style="position:absolute;left:0px;top:15px;width:374px;height:1px;background:#808080;"></div><div style="position:absolute;left:54px;top:0px;width:1px;height:16px;background:#808080;"></div><div style="position:absolute;left:243px;top:0px;width:1px;height:16px;background:#808080;"></div><div style="position:absolute;left:373px;top:0px;width:1px;height:16px;background:#808080;"></div><div style="position:absolute;left:21px;top:1px;width:13px;height:13px;background:#fff;box-shadow:inset 1px 1px #808080, inset -1px -1px #ffffff, inset 2px 2px #404040, inset -2px -2px #d4d0c8;"></div><div style="position:absolute;left:55px;top:0;width:188px;height:15px;overflow:hidden;"><div class="t" style="left:0px;top:7px;font-size:11px;color:#000;font-weight:normal;">Fuel Injector #1 Pulse Width (2-byt...</div></div><div style="position:absolute;left:244px;top:0;width:129px;height:15px;overflow:hidden;"><div class="t" style="left:0px;top:7px;font-size:11px;color:#000;font-weight:normal;">ms</div></div></div><div style="position:absolute;left:0;top:392px;width:374px;height:16px;"><div style="position:absolute;left:0px;top:0px;width:374px;height:15px;background:#fff;"></div><div style="position:absolute;left:0px;top:15px;width:374px;height:1px;background:#808080;"></div><div style="position:absolute;left:54px;top:0px;width:1px;height:16px;background:#808080;"></div><div style="position:absolute;left:243px;top:0px;width:1px;height:16px;background:#808080;"></div><div style="position:absolute;left:373px;top:0px;width:1px;height:16px;background:#808080;"></div><div style="position:absolute;left:21px;top:1px;width:13px;height:13px;background:#fff;box-shadow:inset 1px 1px #808080, inset -1px -1px #ffffff, inset 2px 2px #404040, inset -2px -2px #d4d0c8;"></div><div style="position:absolute;left:55px;top:0;width:188px;height:15px;overflow:hidden;"><div class="t" style="left:0px;top:7px;font-size:11px;color:#000;font-weight:normal;">Fuel Injector #1 Pulse Width (4-byte)*</div></div><div style="position:absolute;left:244px;top:0;width:129px;height:15px;overflow:hidden;"><div class="t" style="left:0px;top:7px;font-size:11px;color:#000;font-weight:normal;">ms</div></div></div><div style="position:absolute;left:0;top:408px;width:374px;height:16px;"><div style="position:absolute;left:0px;top:0px;width:374px;height:15px;background:#fff;"></div><div style="position:absolute;left:0px;top:15px;width:374px;height:1px;background:#808080;"></div><div style="position:absolute;left:54px;top:0px;width:1px;height:16px;background:#808080;"></div><div style="position:absolute;left:243px;top:0px;width:1px;height:16px;background:#808080;"></div><div style="position:absolute;left:373px;top:0px;width:1px;height:16px;background:#808080;"></div><div style="position:absolute;left:21px;top:1px;width:13px;height:13px;background:#fff;box-shadow:inset 1px 1px #808080, inset -1px -1px #ffffff, inset 2px 2px #404040, inset -2px -2px #d4d0c8;"></div><div style="position:absolute;left:55px;top:0;width:188px;height:15px;overflow:hidden;"><div class="t" style="left:0px;top:7px;font-size:11px;color:#000;font-weight:normal;">Fuel Injector #1 Pulse Width ...</div></div><div style="position:absolute;left:244px;top:0;width:129px;height:15px;overflow:hidden;"><div class="t" style="left:0px;top:7px;font-size:11px;color:#000;font-weight:normal;">ms</div></div></div></div>
<div style="position:absolute;left:410px;top:127px;width:16px;height:410px;background:repeating-conic-gradient(#ffffff 0 25%, #d4d0c8 0 50%) 0 0/2px 2px;"></div>
<div style="position:absolute;left:410px;top:128px;width:16px;height:16px;background:#d4d0c8;box-shadow:inset -1px -1px #404040, inset 1px 1px #ffffff, inset -2px -2px #808080, inset 2px 2px #d4d0c8;"><svg width="16" height="16" style="position:absolute;left:0;top:0" shape-rendering="crispEdges"><path fill="#000" d="M7 6h1v1h-1zM6 7h3v1h-3zM5 8h5v1h-5zM4 9h7v1h-7z"/></svg></div>
<div style="position:absolute;left:410px;top:232px;width:16px;height:76px;background:#d4d0c8;box-shadow:inset -1px -1px #404040, inset 1px 1px #ffffff, inset -2px -2px #808080, inset 2px 2px #d4d0c8;"></div>
<div style="position:absolute;left:410px;top:521px;width:16px;height:16px;background:#d4d0c8;box-shadow:inset -1px -1px #404040, inset 1px 1px #ffffff, inset -2px -2px #808080, inset 2px 2px #d4d0c8;"><svg width="16" height="16" style="position:absolute;left:0;top:0" shape-rendering="crispEdges"><path fill="#000" d="M4 6h7v1h-7zM5 7h5v1h-5zM6 8h3v1h-3zM7 9h1v1h-1z"/></svg></div>
<div style="position:absolute;left:431px;top:82px;width:2px;height:462px;background:#fff;"></div>
<div style="position:absolute;left:435px;top:84px;width:558px;height:1px;background:#404040;"></div>
<div style="position:absolute;left:435px;top:84px;width:1px;height:458px;background:#404040;"></div>
<div style="position:absolute;left:992px;top:84px;width:1px;height:458px;background:#fff;"></div>
<div style="position:absolute;left:436px;top:85px;width:556px;height:23px;background:#d4d0c8;box-shadow:inset -1px -1px #404040, inset 1px 1px #ffffff, inset -2px -2px #808080;"><div class="t" style="left:0px;top:11px;font-size:11px;color:#000;font-weight:normal;"><span style="display:inline-block;width:556px;text-align:center">Reset Data</span></div></div>
<div style="position:absolute;left:436px;top:108px;width:556px;height:434px;background:#d4d0c8;box-shadow:inset 1px 1px #808080, inset 2px 2px #404040, inset -2px -2px #fff;"></div>
<div style="position:absolute;left:606px;top:120px;width:13px;height:13px;background:#fff;box-shadow:inset 1px 1px #808080, inset -1px -1px #ffffff, inset 2px 2px #404040, inset -2px -2px #d4d0c8;"><svg width="13" height="13" style="position:absolute;left:0;top:0" shape-rendering="crispEdges"><path fill="#000" d="M9 3h1v1h-1zM8 4h2v1h-2zM3 5h1v1h-1zM7 5h3v1h-3zM3 6h2v1h-2zM6 6h3v1h-3zM3 7h5v1h-5zM4 8h3v1h-3zM5 9h1v1h-1z"/></svg></div>
<div class="t" style="left:622px;top:126px;font-size:11px;color:#000;font-weight:normal;letter-spacing:-0.28px;">Combine Graphs</div>
<div style="position:absolute;left:710px;top:115px;width:98px;height:22px;background:#eceae6;box-shadow:inset 1px 1px #404040, inset 2px 2px #808080, inset -1px -1px #ffffff;"><div class="t" style="left:0px;top:11px;font-size:11px;color:#000;font-weight:normal;"><span style="display:inline-block;width:98px;text-align:center">Pause Graphs</span></div></div>
<div style="position:absolute;left:974px;top:110px;width:16px;height:430px;background:#d4d0c8;"></div>
<div style="position:absolute;left:975px;top:111px;width:15px;height:15px;background:#d4d0c8;box-shadow:inset -1px -1px #404040, inset 1px 1px #ffffff, inset -2px -2px #808080, inset 2px 2px #d4d0c8;"><svg width="15" height="15" style="position:absolute;left:0;top:0" shape-rendering="crispEdges"><path fill="#000" d="M6 5h1v1h-1zM5 6h3v1h-3zM4 7h5v1h-5zM3 8h7v1h-7z"/></svg></div>
<div style="position:absolute;left:975px;top:126px;width:15px;height:388px;background:#d4d0c8;box-shadow:inset -1px -1px #404040, inset 1px 1px #ffffff, inset -2px -2px #808080, inset 2px 2px #d4d0c8;"></div>
<div style="position:absolute;left:975px;top:514px;width:15px;height:10px;background:repeating-conic-gradient(#ffffff 0 25%, #d4d0c8 0 50%) 0 0/2px 2px;"></div>
<div style="position:absolute;left:975px;top:524px;width:15px;height:16px;background:#d4d0c8;box-shadow:inset -1px -1px #404040, inset 1px 1px #ffffff, inset -2px -2px #808080, inset 2px 2px #d4d0c8;"><svg width="15" height="16" style="position:absolute;left:0;top:0" shape-rendering="crispEdges"><path fill="#000" d="M3 6h7v1h-7zM4 7h5v1h-5zM5 8h3v1h-3zM6 9h1v1h-1z"/></svg></div>
<svg style="position:absolute;left:440px;top:147px" width="532" height="393" viewBox="440 147 532 393" font-family="Liberation Sans, sans-serif"><rect x="440" y="147" width="532" height="393" fill="#000"/><text x="706" y="166" text-anchor="middle" fill="#fff" font-size="18" font-weight="bold">Combined Data</text><line x1="443" y1="182.5" x2="458" y2="182.5" stroke="#e87878"/><text x="461" y="186.5" fill="#fff" font-size="12">Exhaust VVT Advance Angle Right</text><line x1="650" y1="182.5" x2="665" y2="182.5" stroke="#7070e8"/><text x="668" y="186.5" fill="#fff" font-size="12">Intake VVT Advance Angle Left</text><line x1="443" y1="203.5" x2="458" y2="203.5" stroke="#78d878"/><text x="461" y="207.5" fill="#fff" font-size="12">Intake VVT Advance Angle Right</text><line x1="639" y1="203.5" x2="654" y2="203.5" stroke="#e8e8b0"/><text x="657" y="207.5" fill="#fff" font-size="12">Exhaust VVT Advance Angle Left</text><line x1="493" y1="505.5" x2="965" y2="505.5" stroke="#303030" stroke-dasharray="2,2"/><line x1="490" y1="505.5" x2="492" y2="505.5" stroke="#a0a0a0"/><text x="486.6" y="508.3" text-anchor="end" fill="#a8a8a8" font-size="9.5" letter-spacing="0.6">0.0</text><line x1="493" y1="477.5" x2="965" y2="477.5" stroke="#303030" stroke-dasharray="2,2"/><line x1="490" y1="477.5" x2="492" y2="477.5" stroke="#a0a0a0"/><text x="486.6" y="480.3" text-anchor="end" fill="#a8a8a8" font-size="9.5" letter-spacing="0.6">0.1</text><line x1="493" y1="450.5" x2="965" y2="450.5" stroke="#303030" stroke-dasharray="2,2"/><line x1="490" y1="450.5" x2="492" y2="450.5" stroke="#a0a0a0"/><text x="486.6" y="453.3" text-anchor="end" fill="#a8a8a8" font-size="9.5" letter-spacing="0.6">0.2</text><line x1="493" y1="423.5" x2="965" y2="423.5" stroke="#303030" stroke-dasharray="2,2"/><line x1="490" y1="423.5" x2="492" y2="423.5" stroke="#a0a0a0"/><text x="486.6" y="426.3" text-anchor="end" fill="#a8a8a8" font-size="9.5" letter-spacing="0.6">0.3</text><line x1="493" y1="395.5" x2="965" y2="395.5" stroke="#303030" stroke-dasharray="2,2"/><line x1="490" y1="395.5" x2="492" y2="395.5" stroke="#a0a0a0"/><text x="486.6" y="398.3" text-anchor="end" fill="#a8a8a8" font-size="9.5" letter-spacing="0.6">0.4</text><line x1="493" y1="368.5" x2="965" y2="368.5" stroke="#303030" stroke-dasharray="2,2"/><line x1="490" y1="368.5" x2="492" y2="368.5" stroke="#a0a0a0"/><text x="486.6" y="371.3" text-anchor="end" fill="#a8a8a8" font-size="9.5" letter-spacing="0.6">0.5</text><line x1="493" y1="341.5" x2="965" y2="341.5" stroke="#303030" stroke-dasharray="2,2"/><line x1="490" y1="341.5" x2="492" y2="341.5" stroke="#a0a0a0"/><text x="486.6" y="344.3" text-anchor="end" fill="#a8a8a8" font-size="9.5" letter-spacing="0.6">0.6</text><line x1="493" y1="313.5" x2="965" y2="313.5" stroke="#303030" stroke-dasharray="2,2"/><line x1="490" y1="313.5" x2="492" y2="313.5" stroke="#a0a0a0"/><text x="486.6" y="316.3" text-anchor="end" fill="#a8a8a8" font-size="9.5" letter-spacing="0.6">0.7</text><line x1="493" y1="286.5" x2="965" y2="286.5" stroke="#303030" stroke-dasharray="2,2"/><line x1="490" y1="286.5" x2="492" y2="286.5" stroke="#a0a0a0"/><text x="486.6" y="289.3" text-anchor="end" fill="#a8a8a8" font-size="9.5" letter-spacing="0.6">0.8</text><line x1="493" y1="258.5" x2="965" y2="258.5" stroke="#303030" stroke-dasharray="2,2"/><line x1="490" y1="258.5" x2="492" y2="258.5" stroke="#a0a0a0"/><text x="486.6" y="261.3" text-anchor="end" fill="#a8a8a8" font-size="9.5" letter-spacing="0.6">0.9</text><line x1="493" y1="231.5" x2="965" y2="231.5" stroke="#303030" stroke-dasharray="2,2"/><line x1="490" y1="231.5" x2="492" y2="231.5" stroke="#a0a0a0"/><text x="486.6" y="234.3" text-anchor="end" fill="#a8a8a8" font-size="9.5" letter-spacing="0.6">1.0</text><line x1="517.5" y1="218" x2="517.5" y2="505" stroke="#303030" stroke-dasharray="2,2"/><line x1="517.5" y1="506" x2="517.5" y2="508" stroke="#a0a0a0"/><text x="518.3" y="519" text-anchor="middle" fill="#a8a8a8" font-size="9.5" letter-spacing="0.7">843</text><line x1="575.5" y1="218" x2="575.5" y2="505" stroke="#303030" stroke-dasharray="2,2"/><line x1="575.5" y1="506" x2="575.5" y2="508" stroke="#a0a0a0"/><text x="576.3" y="519" text-anchor="middle" fill="#a8a8a8" font-size="9.5" letter-spacing="0.7">844</text><line x1="632.5" y1="218" x2="632.5" y2="505" stroke="#303030" stroke-dasharray="2,2"/><line x1="632.5" y1="506" x2="632.5" y2="508" stroke="#a0a0a0"/><text x="633.3" y="519" text-anchor="middle" fill="#a8a8a8" font-size="9.5" letter-spacing="0.7">845</text><line x1="689.5" y1="218" x2="689.5" y2="505" stroke="#303030" stroke-dasharray="2,2"/><line x1="689.5" y1="506" x2="689.5" y2="508" stroke="#a0a0a0"/><text x="690.3" y="519" text-anchor="middle" fill="#a8a8a8" font-size="9.5" letter-spacing="0.7">846</text><line x1="746.5" y1="218" x2="746.5" y2="505" stroke="#303030" stroke-dasharray="2,2"/><line x1="746.5" y1="506" x2="746.5" y2="508" stroke="#a0a0a0"/><text x="747.3" y="519" text-anchor="middle" fill="#a8a8a8" font-size="9.5" letter-spacing="0.7">847</text><line x1="803.5" y1="218" x2="803.5" y2="505" stroke="#303030" stroke-dasharray="2,2"/><line x1="803.5" y1="506" x2="803.5" y2="508" stroke="#a0a0a0"/><text x="804.3" y="519" text-anchor="middle" fill="#a8a8a8" font-size="9.5" letter-spacing="0.7">848</text><line x1="860.5" y1="218" x2="860.5" y2="505" stroke="#303030" stroke-dasharray="2,2"/><line x1="860.5" y1="506" x2="860.5" y2="508" stroke="#a0a0a0"/><text x="861.3" y="519" text-anchor="middle" fill="#a8a8a8" font-size="9.5" letter-spacing="0.7">849</text><line x1="917.5" y1="218" x2="917.5" y2="505" stroke="#303030" stroke-dasharray="2,2"/><line x1="917.5" y1="506" x2="917.5" y2="508" stroke="#a0a0a0"/><text x="918.3" y="519" text-anchor="middle" fill="#a8a8a8" font-size="9.5" letter-spacing="0.7">850</text><rect x="492.5" y="217.5" width="472" height="288" fill="none" stroke="#555555"/><line x1="492.5" y1="217" x2="492.5" y2="506" stroke="#a0a0a0"/><line x1="492" y1="505.5" x2="965" y2="505.5" stroke="#a0a0a0"/><polyline fill="none" stroke="#ffffc0" points="778.5,505 781.5,231.5 809.5,231.5 811.5,505"/><line x1="779" y1="505.5" x2="811" y2="505.5" stroke="#5858d8"/><polyline fill="none" stroke="#e87878" points="512,505.5 774,505.5 774.5,231.5 815,231.5 816,505.5 965,505.5"/><text x="728.5" y="537" text-anchor="middle" fill="#fff" font-size="13">Time (sec)</text><text transform="translate(463,362) rotate(-90)" text-anchor="middle" fill="#fff" font-size="12">Data</text></svg>
<div style="position:absolute;left:7px;top:545px;width:31px;height:18px;background:#d4d0c8;box-shadow:inset 1px 0 #fff, inset -1px -1px #404040, inset -2px -2px #808080;"><div class="t" style="left:4px;top:8px;font-size:11px;color:#000;font-weight:normal;">Data</div></div>
<div style="position:absolute;left:82px;top:545px;width:61px;height:18px;background:#d4d0c8;box-shadow:inset 1px 0 #fff, inset -1px -1px #404040, inset -2px -2px #808080;"><div class="t" style="left:3px;top:8px;font-size:11px;color:#000;font-weight:normal;">Dashboard</div></div>
<div style="position:absolute;left:143px;top:545px;width:31px;height:18px;background:#d4d0c8;box-shadow:inset 1px 0 #fff, inset -1px -1px #404040, inset -2px -2px #808080;"><div class="t" style="left:5px;top:8px;font-size:11px;color:#000;font-weight:normal;">MAF</div></div>
<div style="position:absolute;left:175px;top:545px;width:49px;height:18px;background:#d4d0c8;box-shadow:inset 1px 0 #fff, inset -1px -1px #404040, inset -2px -2px #808080;"><div class="t" style="left:5px;top:8px;font-size:11px;color:#000;font-weight:normal;">Injector</div></div>
<div style="position:absolute;left:224px;top:545px;width:35px;height:18px;background:#d4d0c8;box-shadow:inset 1px 0 #fff, inset -1px -1px #404040, inset -2px -2px #808080;"><div class="t" style="left:5px;top:8px;font-size:11px;color:#000;font-weight:normal;">Dyno</div></div>
<div style="position:absolute;left:38px;top:544px;width:43px;height:21px;background:#d4d0c8;box-shadow:inset 1px 0 #fff, inset -1px -1px #404040, inset -2px -2px #808080;"><div class="t" style="left:7px;top:11px;font-size:11px;color:#000;font-weight:normal;">Graph</div></div>
<div style="position:absolute;left:4px;top:567px;width:472px;height:26px;box-shadow:inset 1px 1px #808080, inset -1px -1px #ffffff;"><div class="t" style="left:1px;top:13px;font-size:11px;color:#000;font-weight:normal;">Querying ECU...</div></div>
<div style="position:absolute;left:479px;top:567px;width:247px;height:26px;box-shadow:inset 1px 1px #808080, inset -1px -1px #ffffff;"><div class="t" style="left:24px;top:13px;font-size:11px;color:#000;font-weight:normal;letter-spacing:-0.08px;">CAL ID:&nbsp; Unknown&nbsp; ECU ID: 5B42564107</div></div>
<div style="position:absolute;left:728px;top:567px;width:267px;height:26px;box-shadow:inset 1px 1px #808080, inset -1px -1px #ffffff;"><div class="t" style="left:22px;top:13px;font-size:11px;color:#000;font-weight:normal;letter-spacing:0.1px;">Fast-K:[ 27.83 queries/sec, 0.04 sec/query ]</div></div>
</body></html>
